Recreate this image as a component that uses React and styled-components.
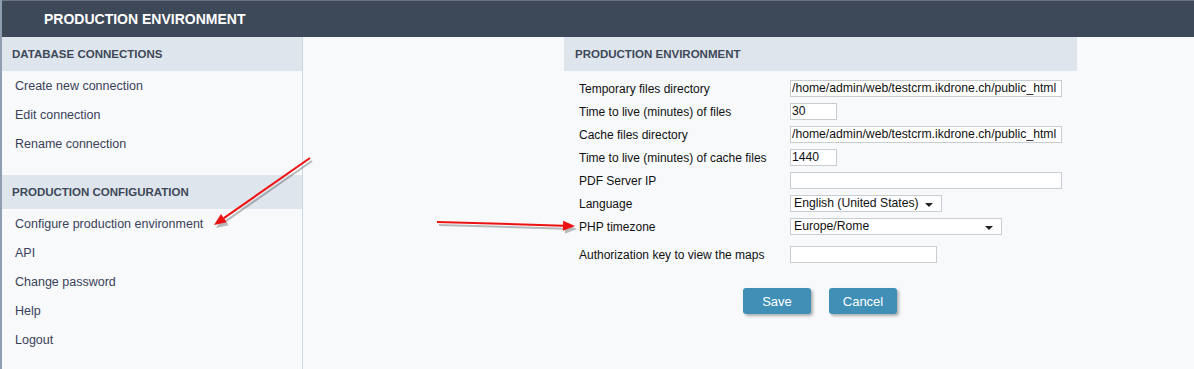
import styled, { createGlobalStyle } from "styled-components"

const GlobalStyle = createGlobalStyle`
  html, body {
    margin: 0;
    padding: 0;
    background: #f7f9fb;
    font-family: "Liberation Sans", Arial, sans-serif;
  }
`

const Page = styled.div`
  position: relative;
  width: 1194px;
  height: 369px;
  overflow: hidden;
  border-left: 2px solid #8f9fb1;
  box-sizing: border-box;
  background: #f7f9fb;
`

const TopBar = styled.div`
  height: 37px;
  background: #3d4859;
  border-top: 1px solid #6b7480;
  box-sizing: border-box;
  display: flex;
  align-items: center;
  padding-left: 42px;
  color: #fff;
  font-weight: bold;
  font-size: 14px;
`

const Body = styled.div`
  display: flex;
  height: 332px;
`

const Sidebar = styled.div`
  width: 300px;
  border-right: 1px solid #cdd7e1;
  background: #f7f9fb;
  display: flex;
  flex-direction: column;
`

const SectionHead = styled.div`
  height: 34px;
  background: #dfe5ec;
  display: flex;
  align-items: center;
  padding-left: 10px;
  font-size: 11.5px;
  font-weight: bold;
  color: #3d4859;
`

const MenuList = styled.div`
  display: flex;
  flex-direction: column;
  padding-bottom: ${p => p.$gap || 0}px;
`

const MenuItem = styled.div`
  height: 29px;
  display: flex;
  align-items: center;
  padding-left: 13px;
  font-size: 12.5px;
  color: #3b3f5a;
`

const Main = styled.div`
  flex: 1;
  padding-left: 261px;
`

const Panel = styled.div`
  width: 513px;
`

const PanelHead = styled(SectionHead)`
  padding-left: 11px;
`

const Form = styled.div`
  padding: 6px 0 0 15px;
  display: flex;
  flex-direction: column;
`

const Row = styled.div`
  display: flex;
  align-items: center;
  height: 23px;
  margin-top: ${p => p.$top || 0}px;
`

const Label = styled.div`
  width: 211px;
  font-size: 12px;
  color: #111;
`

const Input = styled.div`
  width: ${p => p.$w}px;
  height: 17px;
  box-sizing: border-box;
  background: #fff;
  border: 1px solid #c9ccd0;
  font-size: 12.2px;
  line-height: 15px;
  padding-left: 1px;
  color: #111;
  white-space: nowrap;
  overflow: hidden;
`

const Select = styled(Input)`
  display: flex;
  align-items: center;
  justify-content: space-between;
  padding: 0 8px 0 3px;
  &::after {
    content: "";
    border-left: 4px solid transparent;
    border-right: 4px solid transparent;
    border-top: 4px solid #222;
    margin-top: 3px;
  }
`

const Buttons = styled.div`
  display: flex;
  gap: 18px;
  margin-top: 22px;
  padding-left: 164px;
`

const Button = styled.div`
  width: 68px;
  height: 26px;
  border-radius: 3px;
  background: #3f8fb6;
  color: #fff;
  font-size: 13px;
  display: flex;
  align-items: center;
  justify-content: center;
  box-shadow: 2px 2px 3px rgba(0, 0, 0, 0.3);
`

const Overlay = styled.svg`
  position: absolute;
  left: -2px;
  top: 0;
  pointer-events: none;
`

const Arrow = ({ x1, y1, x2, y2 }) => {
  const a = Math.atan2(y2 - y1, x2 - x1)
  const L = 12
  const W = 5
  const bx = x2 - L * Math.cos(a)
  const by = y2 - L * Math.sin(a)
  const px = -Math.sin(a) * W
  const py = Math.cos(a) * W
  const head = `${x2},${y2} ${bx + px},${by + py} ${bx - px},${by - py}`
  return (
    <g>
      <g transform="translate(2,3)" opacity="0.25">
        <line x1={x1} y1={y1} x2={bx} y2={by} stroke="#000" strokeWidth="2" />
        <polygon points={head} fill="#000" />
      </g>
      <line x1={x1} y1={y1} x2={bx} y2={by} stroke="#ee1111" strokeWidth="2" />
      <polygon points={head} fill="#ee1111" />
    </g>
  )
}

const fields = [
  { label: "Temporary files directory", w: 272, value: "/home/admin/web/testcrm.ikdrone.ch/public_html" },
  { label: "Time to live (minutes) of files", w: 47, value: "30" },
  { label: "Cache files directory", w: 272, value: "/home/admin/web/testcrm.ikdrone.ch/public_html" },
  { label: "Time to live (minutes) of cache files", w: 47, value: "1440" },
  { label: "PDF Server IP", w: 272, value: "" },
  { label: "Language", w: 152, value: "English (United States)", select: true },
  { label: "PHP timezone", w: 212, value: "Europe/Rome", select: true },
]

export default function App() {
  return (
    <>
      <GlobalStyle />
      <Page>
        <TopBar>PRODUCTION ENVIRONMENT</TopBar>
        <Body>
          <Sidebar>
            <SectionHead>DATABASE CONNECTIONS</SectionHead>
            <MenuList $gap={17}>
              <MenuItem>Create new connection</MenuItem>
              <MenuItem>Edit connection</MenuItem>
              <MenuItem>Rename connection</MenuItem>
            </MenuList>
            <SectionHead>PRODUCTION CONFIGURATION</SectionHead>
            <MenuList>
              <MenuItem>Configure production environment</MenuItem>
              <MenuItem>API</MenuItem>
              <MenuItem>Change password</MenuItem>
              <MenuItem>Help</MenuItem>
              <MenuItem>Logout</MenuItem>
            </MenuList>
          </Sidebar>
          <Main>
            <Panel>
              <PanelHead>PRODUCTION ENVIRONMENT</PanelHead>
              <Form>
                {fields.map((f, i) => (
                  <Row key={i}>
                    <Label>{f.label}</Label>
                    {f.select ? <Select $w={f.w}>{f.value}</Select> : <Input $w={f.w}>{f.value}</Input>}
                  </Row>
                ))}
                <Row $top={5}>
                  <Label>Authorization key to view the maps</Label>
                  <Input $w={147} />
                </Row>
                <Buttons>
                  <Button>Save</Button>
                  <Button>Cancel</Button>
                </Buttons>
              </Form>
            </Panel>
          </Main>
        </Body>
        <Overlay width="1194" height="369">
          <Arrow x1={310} y1={158} x2={214} y2={225} />
          <Arrow x1={437} y1={222} x2={575} y2={226} />
        </Overlay>
      </Page>
    </>
  )
}
